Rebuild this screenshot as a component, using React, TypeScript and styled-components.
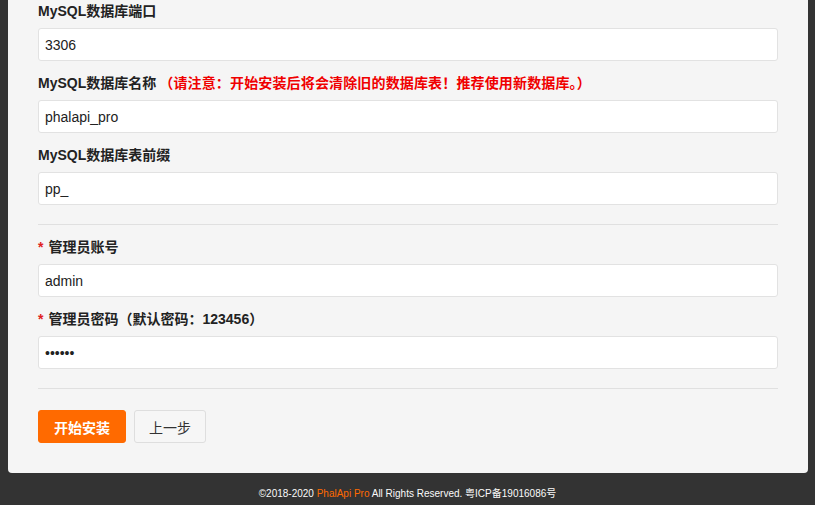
import React from "react";
import styled, { createGlobalStyle } from "styled-components";

const GlobalStyle = createGlobalStyle`
  html, body {
    margin: 0;
    padding: 0;
    background: #333333;
    overflow: hidden;
  }
  body {
    font-family: "Liberation Sans", "Noto Sans CJK SC", Arial, sans-serif;
    color: #333;
  }
  * { box-sizing: border-box; }
`;

const Page = styled.div`
  width: 815px;
  height: 505px;
  background: #333333;
  display: flex;
  flex-direction: column;
`;

const Card = styled.div`
  margin: 0 7px 0 8px;
  background: #f5f5f5;
  border-radius: 0 0 4px 4px;
  padding: 1px 30px 30px;
  display: flex;
  flex-direction: column;
`;

const Item = styled.div`
  display: flex;
  flex-direction: column;
  margin-bottom: 12px;
`;

const Label = styled.label`
  display: flex;
  align-items: center;
  height: 20px;
  line-height: 20px;
  font-size: 14px;
  font-weight: bold;
  color: #222;
  margin-bottom: 7px;
  white-space: nowrap;
`;

const Required = styled.span`
  color: #e02020;
  font-size: 14px;
  margin-right: 5px;
  font-weight: bold;
`;

const Warn = styled.span`
  color: #f00000;
  margin-left: 3px;
  letter-spacing: 0.15px;
`;

const Normal = styled.span`
  font-weight: bold;
`;

const Input = styled.input`
  height: 33px;
  width: 100%;
  border: 1px solid #e2e2e2;
  border-radius: 3px;
  background: #fff;
  padding: 0 6px;
  font-family: "Liberation Sans", "Noto Sans CJK SC", Arial, sans-serif;
  font-size: 14px;
  color: #222;
  outline: none;
`;

const Divider = styled.hr`
  border: none;
  border-top: 1px solid #e0e0e0;
  margin: 7px 0 12px;
  height: 0;
`;

const ButtonRow = styled.div`
  display: flex;
  gap: 8px;
  margin-top: 9px;
`;

const Button = styled.button<{ $primary?: boolean }>`
  height: 33px;
  padding: 0 ${(p) => (p.$primary ? "15px" : "14px")};
  font-family: "Liberation Sans", "Noto Sans CJK SC", Arial, sans-serif;
  font-size: 14px;
  border-radius: 3px;
  cursor: pointer;
  border: 1px solid ${(p) => (p.$primary ? "#ff6a00" : "#dedede")};
  background: ${(p) => (p.$primary ? "#ff6a00" : "#f6f6f6")};
  color: ${(p) => (p.$primary ? "#fff" : "#333")};
  font-weight: ${(p) => (p.$primary ? "bold" : "normal")};
`;

const Footer = styled.div`
  padding-top: 14px;
  text-align: center;
  font-size: 10px;
  line-height: 14px;
  color: #fafafa;
`;

const Brand = styled.span`
  color: #ff6a00;
`;

export default function App() {
  return (
    <Page>
      <GlobalStyle />
      <Card>
        <Item>
          <Label>MySQL数据库端口</Label>
          <Input readOnly defaultValue="3306" />
        </Item>
        <Item>
          <Label>
            MySQL数据库名称
            <Warn>（请注意：开始安装后将会清除旧的数据库表！推荐使用新数据库。）</Warn>
          </Label>
          <Input readOnly defaultValue="phalapi_pro" />
        </Item>
        <Item>
          <Label>MySQL数据库表前缀</Label>
          <Input readOnly defaultValue="pp_" />
        </Item>
        <Divider />
        <Item>
          <Label>
            <Required>*</Required>
            <Normal>管理员账号</Normal>
          </Label>
          <Input readOnly defaultValue="admin" />
        </Item>
        <Item>
          <Label>
            <Required>*</Required>
            <Normal>管理员密码（默认密码：123456）</Normal>
          </Label>
          <Input readOnly type="password" defaultValue="123456" />
        </Item>
        <Divider />
        <ButtonRow>
          <Button $primary>开始安装</Button>
          <Button>上一步</Button>
        </ButtonRow>
      </Card>
      <Footer>
        ©2018-2020 <Brand>PhalApi Pro</Brand> All Rights Reserved. 粤ICP备19016086号
      </Footer>
    </Page>
  );
}
